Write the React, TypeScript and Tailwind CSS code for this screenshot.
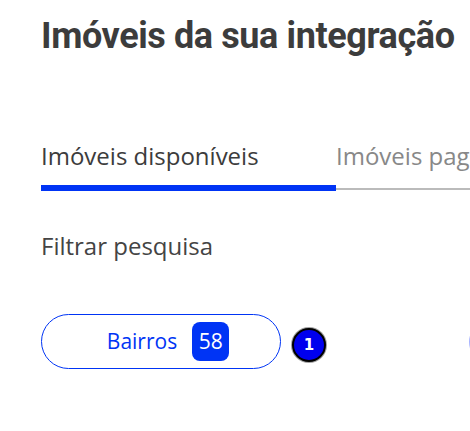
export default function App() {
  return (
    <div className="w-[470px] h-[431px] overflow-hidden bg-white">
      <div className="pl-[41px] pt-[14px]">
        <h1
          className="text-[36px] leading-[44px] font-bold text-[#3c3c3c] whitespace-nowrap tracking-[-0.4px]"
          style={{ fontFamily: "Roboto, sans-serif" }}
        >
          Imóveis da sua integração
        </h1>
        <div
          className="mt-[83px] flex items-start w-[600px]"
          style={{ fontFamily: "'Open Sans', sans-serif" }}
        >
          <div className="w-[295px] h-[50px] border-b-[6px] border-[#0034f5] text-[24px] leading-[30px] text-[#3c3c3c] whitespace-nowrap">
            Imóveis disponíveis
          </div>
          <div className="flex-1 h-[49px] border-b-2 border-[#bbbbbb] text-[24px] leading-[30px] text-[#888888] whitespace-nowrap">
            Imóveis pagos
          </div>
        </div>
        <div
          className="mt-[40px] text-[24px] leading-[30px] text-[#444444] whitespace-nowrap"
          style={{ fontFamily: "'Open Sans', sans-serif" }}
        >
          Filtrar pesquisa
        </div>
        <div
          className="mt-[53px] flex items-center w-[600px]"
          style={{ fontFamily: "'Open Sans', sans-serif" }}
        >
          <div className="w-[240px] h-[55px] rounded-full border border-[#0034f5] flex items-center justify-center gap-[15px] pl-[14px]">
            <span className="text-[21px] text-[#0034f5]">Bairros</span>
            <span className="w-[37px] h-[39px] rounded-[8px] bg-[#0034f5] text-white text-[21px] flex items-center justify-center">
              58
            </span>
          </div>
          <div className="ml-[10px] mt-[7px] w-[36px] h-[36px] rounded-full bg-[#a0a0a0] p-[1px]">
            <div className="w-full h-full rounded-full border-2 border-black bg-[#0000ee] flex items-center justify-center text-white text-[15px] font-bold" style={{ fontFamily: "'DejaVu Sans', sans-serif" }}>
              1
            </div>
          </div>
          <div className="ml-[142px] w-[55px] h-[40px] rounded-full border-2 border-[#a8b4ff]" />
        </div>
      </div>
    </div>
  );
}
